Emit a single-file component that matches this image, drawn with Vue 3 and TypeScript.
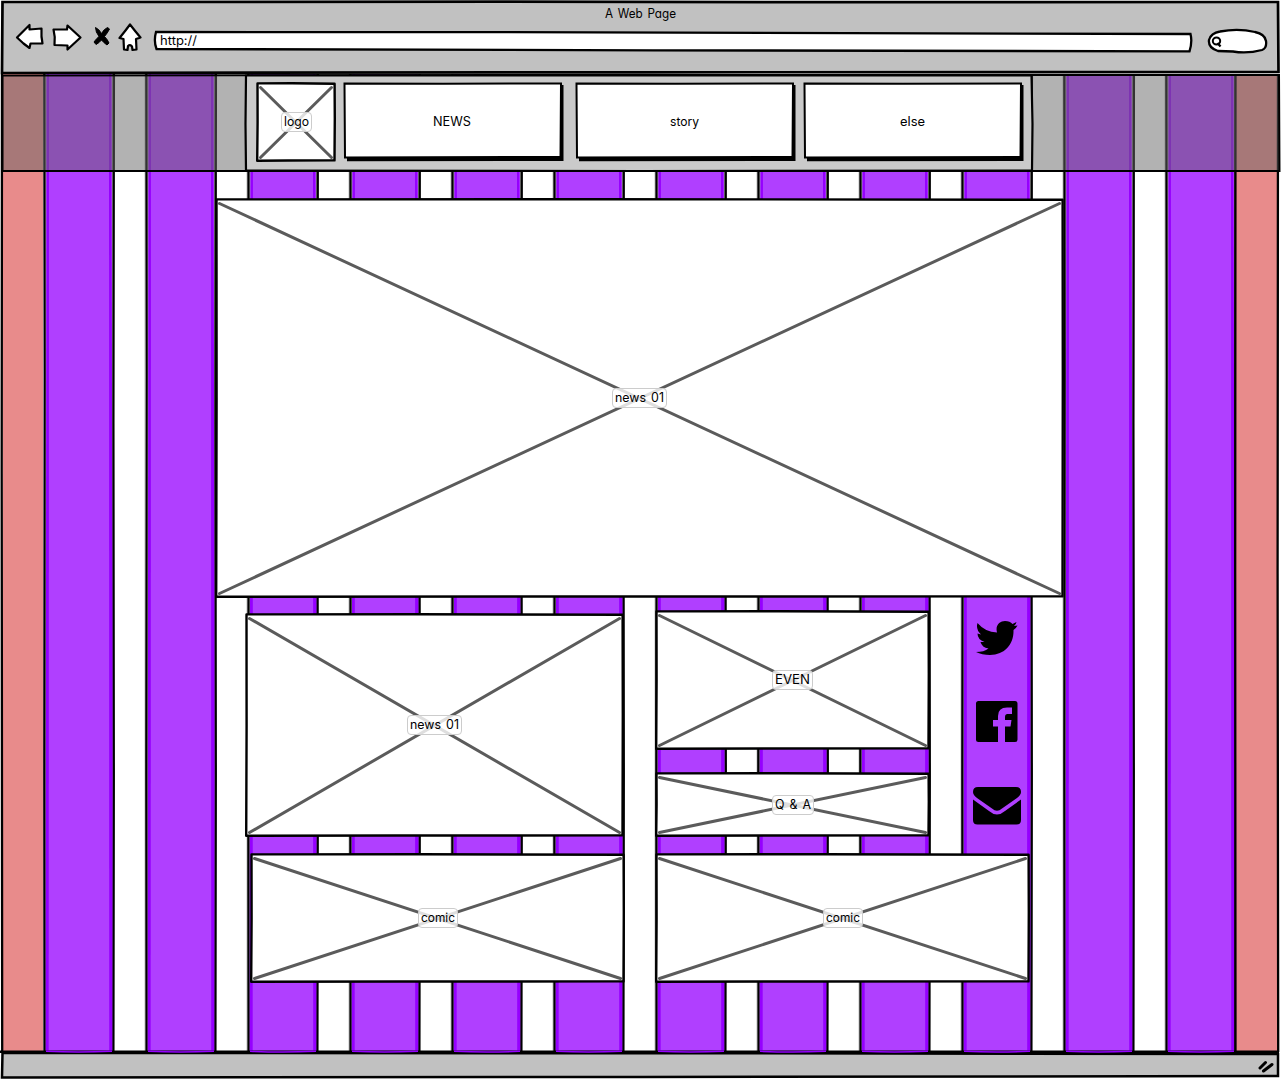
<script setup lang="ts">
import { h, type FunctionalComponent } from 'vue'

interface BoxProps {
  w: number
  h: number
  label: string
  textW: number
}

const outline = (w: number, ht: number): string =>
  `M1.5 1.4L${w * 0.45} 1.2L${w - 1.4} 1.8L${w - 1.2} ${ht * 0.45}L${w - 1.5} ${ht - 1.6}L${w * 0.4} ${ht - 1.5}L1.2 ${ht - 1.3}L1.6 ${ht * 0.5}Z`

const label = (text: string, width: number) =>
  h('svg', { class: 'label-text', width, height: 18 }, [
    h('text', { x: 0, y: 13, textLength: width, lengthAdjust: 'spacingAndGlyphs' }, text),
  ])

const PictureBox: FunctionalComponent<BoxProps> = (p) =>
  h('div', { class: 'picture', style: { width: `${p.w}px`, height: `${p.h}px` } }, [
    h('svg', { class: 'picture-lines', width: p.w, height: p.h }, [
      h('path', { d: outline(p.w, p.h), fill: '#fff', stroke: '#000', 'stroke-width': 2.4, 'stroke-linejoin': 'round' }),
      h('path', {
        d: `M4.5 5.5L${p.w - 4.5} ${p.h - 4.5}M${p.w - 4.5} 5.5L4.5 ${p.h - 4.5}`,
        stroke: '#5b5b5b',
        'stroke-width': 3,
        'stroke-linecap': 'round',
      }),
    ]),
    h('span', { class: 'caption' }, [label(p.label, p.textW)]),
  ])
PictureBox.props = ['w', 'h', 'label', 'textW']

const stripes = Array.from({ length: 12 }, (_, i) => i)
const menu = [
  { text: 'NEWS', width: 38 },
  { text: 'story', width: 29 },
  { text: 'else', width: 25 },
]
</script>

<template>
  <div class="browser">
    <header class="chrome">
      <svg class="chrome-frame" width="1281" height="76">
        <path d="M2.5 2L500 1.7L900 2.2L1278 2L1278.5 72L640 72.3L2 73Z" fill="#c1c1c1" stroke="#000" stroke-width="2.7" />
      </svg>
      <div class="chrome-body">
        <div class="title">
          <svg class="label-text" width="72" height="18"><text x="0" y="13" textLength="71" lengthAdjust="spacingAndGlyphs">A Web Page</text></svg>
        </div>
        <div class="toolbar">
          <svg class="nav-icons" width="130" height="32" fill="#fff" stroke="#000" stroke-width="2.2" stroke-linejoin="round">
            <path d="M2 14.5L14.5 2V6.500L26.500 5.500Q26 14 27.500 20.500H15.500L14.500 25L8.500 20.500Z" />
            <path d="M38.500 6.500L52 6.500L52.500 2.500L65.500 14.500L52.500 26.500V22.500L39.500 22Q40.500 14 38.500 6.500Z" />
            <path d="M80.500 4.500Q84 6 86.500 10.500Q89 6 92.500 4.500L94.500 6Q92.500 10 89.500 13.500Q92.500 16.500 94 20L92 22Q89 20 86.500 17Q84 20 81 21.500L79 19Q81 16 84 13.500Q80.500 9 80.500 4.500Z" fill="#000" stroke-width="1" />
            <path d="M115 1.500Q120 8 125.500 14.500L121 16L121.500 26.500L117.500 27L117 23.500Q115 21 113 23L112.500 27L109 26.500L108.500 16L104.500 15Q109.500 9 115 1.500Z" />
          </svg>
          <svg class="address" width="1040" height="24">
            <path d="M3 3L350 3.200L1037.500 5Q1039.500 13 1036.500 22.300L500 21.300L3.500 20Q.5 12 3 3Z" fill="#fff" stroke="#000" stroke-width="2.300" />
            <text x="7" y="15.500" textLength="37" lengthAdjust="spacingAndGlyphs">http://</text>
          </svg>
          <svg class="search" width="62" height="27" fill="none" stroke="#000">
            <path d="M13 3.500Q31 0 48 4Q58 6 59 13Q60 20 55 22Q40 26 26 23.500L11 23Q1 20 2 12Q4 5 13 3.500Z" fill="#fff" stroke-width="2.300" />
            <ellipse cx="9.500" cy="13" rx="3.700" ry="3.500" stroke-width="2" />
            <path d="M10.500 15L13.500 18.500" stroke-width="2.300" />
          </svg>
        </div>
      </div>
    </header>

    <main class="viewport">
      <div class="stripes">
        <div class="side left"></div>
        <svg v-for="i in stripes" :key="i" class="stripe" width="102" height="979">
          <path d="M2 0H71V978H2Z" fill="#777" />
          <path d="M3.200 0H69V979H3.200Z" fill="#b03fff" />
          <path d="M4 0H6L5.700 979H2.500L3 520Z" fill="#9500ff" />
          <path d="M66 0H68L69.700 540V979H66.200Z" fill="#9500ff" />
          <path d="M1.200 0L1.600 300L1.200 700L1.400 978M71 0L70.500 350L70.900 700L70.500 978" stroke="#000" stroke-width="2.100" fill="none" />
          <path d="M101.700 0V978" stroke="#bbb" stroke-width=".6" />
        </svg>
        <div class="side right"></div>
      </div>

      <svg class="edges" width="1281" height="979">
        <path d="M2 0L1.700 400L2.200 978M1278 0L1277.600 500L1278.200 978M1235.500 0L1235.200 500L1235.500 978" stroke="#000" stroke-width="2.300" fill="none" />
      </svg>

      <div class="page">
        <div class="banner">
          <svg class="banner-frame" width="1281" height="98">
            <path d="M2.500 1.500L640 1L1279 1L1279.500 97L640 96.700L2.500 97Z" fill="rgba(102,102,102,.5)" stroke="#000" stroke-width="2" />
            <path d="M246 1.500H1031.500L1032.500 50L1032 96.500L640 97L246 96.500L245.500 50Z" fill="#cacaca" stroke="#000" stroke-width="2.200" />
          </svg>
          <nav class="menu">
            <PictureBox :w="80" :h="80" label="logo" :text-w="25" />
            <div v-for="item in menu" :key="item.text" class="button">
              <svg class="button-frame" width="222" height="80">
                <path d="M4 4L220.500 3L220.500 79L4 79.300Z" />
                <path d="M1.500 1.500L100 1.700L218 1.500L217.500 75L2 75.500Z" fill="#fff" stroke="#000" stroke-width="2" />
              </svg>
              <svg class="label-text" :width="item.width" height="18">
                <text x="0" y="13" :textLength="item.width" lengthAdjust="spacingAndGlyphs">{{ item.text }}</text>
              </svg>
            </div>
          </nav>
        </div>

        <div class="hero">
          <PictureBox :w="849" :h="400" label="news 01" :text-w="49" />
        </div>

        <div class="lower">
          <section class="left-col">
            <PictureBox class="news" :w="379" :h="224" label="news 01" :text-w="49" />
            <PictureBox class="comic-left" :w="375" :h="130" label="comic" :text-w="34" />
          </section>
          <section class="right-col">
            <div class="right-top">
              <div class="events">
                <PictureBox :w="275" :h="140" label="EVEN" :text-w="35" />
                <PictureBox :w="275" :h="65" label="Q &amp; A" :text-w="36" />
              </div>
              <aside class="social">
                <svg width="42" height="36" viewBox="0 0 42 36">
                  <path d="M1.500 2Q9 11 21 11.500C19 4 24 0 29 0Q34 0 36.500 3L40.500 1Q40 3.500 38 5L41.500 4.500Q40 7.500 37.500 9C38 23 29 34 14 34Q6 34 0 31Q8 31 12.500 27.500Q6 26.500 4.500 21H8.500Q1.500 18.500 1.500 12.500L5 13.500Q-.5 8.500 1.500 2Z" />
                </svg>
                <svg width="42" height="42" viewBox="0 0 42 42">
                  <path d="M2.500 0H39Q41.500 0 41.500 2.500V38.500Q41.500 41 39 41H29V25.500H34.500L35.500 19H29V16Q29 13 31.500 13H36V6.500H31Q22 6.500 22 15V19H17V25.500H22V41H2.500Q0 41 0 38.500V2.500Q0 0 2.500 0Z" />
                </svg>
                <svg width="48" height="38" viewBox="0 0 48 38">
                  <path d="M5 0H43Q48 0 48 5Q48 8 44 11L29 21.500Q24 26 19 21.500L4 11Q0 8 0 5Q0 0 5 0Z" />
                  <path d="M0 12.500L16 24Q24 31 32 24L48 12.500V33Q48 37.500 43.500 37.500H4.500Q0 37.500 0 33Z" />
                </svg>
              </aside>
            </div>
            <PictureBox :w="375" :h="130" label="comic" :text-w="34" />
          </section>
        </div>
      </div>
    </main>

    <footer class="status">
      <svg width="1281" height="30">
        <path d="M2.500 3L640 3.200L1278 4L1278 27L640 26.800L2 27.500Z" fill="#c1c1c1" />
        <path d="M0 1.700H1279M2.500 3L640 3.200L1278 4L1278 26L640 27L2 27.500Z" fill="none" stroke="#000" stroke-width="2.500" />
        <path v-for="i in stripes" :key="i" :d="`M${46 + i * 102} 1.300Q${78 + i * 102} 2.800 ${112 + i * 102} 1.300`" fill="none" stroke="#9500ff" stroke-width="1.500" />
        <path d="M1260 18L1265.500 12.500M1263.500 21L1272 14.500" stroke="#000" stroke-width="3" stroke-linecap="round" />
      </svg>
    </footer>
  </div>
</template>

<style>
body {
  margin: 0;
  background: #fff;
}
.picture {
  display: grid;
  place-items: center;
  flex: none;
}
.picture > * {
  grid-area: 1 / 1;
}
.picture svg {
  display: block;
}
.caption {
  padding: 0 2px;
  border: 1px solid #ccc;
  border-radius: 4px;
  background: rgba(255, 255, 255, 0.8);
}
.label-text {
  display: block;
  overflow: visible;
}
.label-text text,
.address text {
  font: 12.5px 'Inter', sans-serif;
  font-feature-settings: 'cv11' 1;
  word-spacing: 1.5px;
}
</style>

<style scoped>
.browser {
  width: 1281px;
  height: 1080px;
  overflow: hidden;
  display: flex;
  flex-direction: column;
  background: #fff;
  color: #000;
}
svg {
  display: block;
  flex: none;
}
.chrome,
.viewport,
.banner,
.button {
  display: grid;
}
.chrome > *,
.viewport > *,
.banner > *,
.button > * {
  grid-area: 1 / 1;
}
.chrome {
  height: 74px;
}
.title {
  display: flex;
  justify-content: center;
  padding-top: 5px;
  height: 18px;
}
.toolbar {
  display: flex;
  align-items: flex-start;
  padding-left: 15px;
}
.address {
  margin: 6px 0 0 8px;
}
.search {
  margin: 5px 0 0 14px;
}
.viewport {
  height: 979px;
}
.stripes {
  display: flex;
}
.side {
  flex: none;
  background: #e88b8b;
}
.side.left {
  width: 40px;
  margin-left: 3px;
}
.side.right {
  width: 42px;
  margin-left: -31px;
}
.banner {
  height: 98px;
}
.menu {
  display: flex;
  align-items: flex-start;
  padding: 8px 0 0 256px;
}
.button {
  place-items: center;
  width: 222px;
  height: 80px;
  margin-left: 7px;
}
.button .label-text {
  margin-right: 4px;
}
.button:nth-child(3) {
  margin-left: 10px;
}
.button:nth-child(4) {
  margin-left: 6px;
}
.hero {
  padding: 26px 0 0 215px;
}
.lower {
  display: flex;
  padding-left: 245px;
}
.left-col {
  width: 410px;
  padding-top: 15px;
}
.comic-left {
  margin: 16px 0 0 5px;
}
.right-top {
  display: flex;
  height: 255px;
}
.events {
  display: flex;
  flex-direction: column;
  gap: 22px;
  padding-top: 12px;
}
.social {
  display: flex;
  flex-direction: column;
  align-items: center;
  width: 70px;
  margin-left: 32px;
  padding-top: 23px;
  gap: 44px;
}
.status {
  height: 30px;
  margin-top: -3px;
  z-index: 1;
}
</style>
